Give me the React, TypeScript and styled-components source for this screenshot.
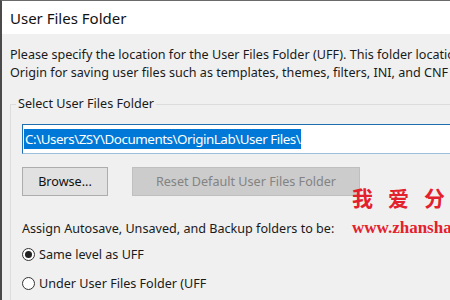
import { FC } from 'react';
import styled, { createGlobalStyle } from 'styled-components';

const GlobalStyle = createGlobalStyle`
  html, body {
    margin: 0;
    padding: 0;
    background: #f0f0f0;
  }
  body {
    font-family: 'Noto Sans', 'Open Sans', sans-serif;
    color: #1a1a1a;
  }
`;

const Window = styled.div`
  position: relative;
  width: 450px;
  height: 300px;
  overflow: hidden;
  box-sizing: border-box;
  border-left: 2px solid #4a4a4a;
  border-top: 1px solid #6a6a6a;
  background: #f0f0f0;
  display: flex;
  flex-direction: column;
`;

const TitleBar = styled.div`
  height: 33px;
  flex: none;
  background: #ffffff;
  display: flex;
  align-items: center;
  padding-left: 8px;
  font-size: 15px;
  color: #111;
`;

const Body = styled.div`
  flex: 1;
  padding: 12px 0 0 8px;
  white-space: nowrap;
  font-size: 12.6px;
`;

const Intro = styled.p`
  margin: 0;
  line-height: 18px;
`;

const GroupBox = styled.fieldset`
  margin: 13px 0 0 0;
  width: 480px;
  border: 1px solid #dcdcdc;
  border-right: none;
  padding: 11px 0 20px 11px;
  box-sizing: border-box;
`;

const GroupLabel = styled.legend`
  padding: 0 2px;
  margin-left: -6px;
  line-height: 18px;
`;

const PathField = styled.div`
  height: 30px;
  box-sizing: border-box;
  border: 1px solid #1f6fb0;
  border-bottom-color: #9ebfdc;
  background: #fff;
  display: flex;
  align-items: center;
  padding-left: 1px;
`;

const Selected = styled.span`
  background: #0078d7;
  color: #fff;
  font-size: 13.4px;
  letter-spacing: -0.45px;
  line-height: 20px;
  padding: 0 1px;
`;

const ButtonRow = styled.div`
  display: flex;
  gap: 24px;
  margin-top: 13px;
`;

const Button = styled.div<{ $disabled?: boolean; $width: number }>`
  width: ${({ $width }) => $width}px;
  height: 29px;
  box-sizing: border-box;
  display: flex;
  align-items: center;
  justify-content: center;
  background: ${({ $disabled }) => ($disabled ? '#cccccc' : '#e1e1e1')};
  border: 1px solid ${({ $disabled }) => ($disabled ? '#bfbfbf' : '#adadad')};
  color: ${({ $disabled }) => ($disabled ? '#838383' : '#111')};
`;

const AssignText = styled.div`
  line-height: 18px;
  margin-top: 24px;
`;

const RadioRow = styled.div`
  display: flex;
  align-items: center;
  gap: 4px;
  height: 18px;
  margin-top: 7px;
  & + & {
    margin-top: 11px;
  }
`;

const RadioDot = styled.span<{ $checked?: boolean }>`
  width: 13px;
  height: 13px;
  box-sizing: border-box;
  border-radius: 50%;
  border: 1px solid #333;
  background: #fff;
  display: flex;
  align-items: center;
  justify-content: center;
  &::after {
    content: '';
    width: 7px;
    height: 7px;
    border-radius: 50%;
    background: ${({ $checked }) => ($checked ? '#222' : 'transparent')};
  }
`;

const Watermark = styled.div`
  position: absolute;
  left: 350px;
  top: 182px;
  color: #e3212d;
  font-weight: bold;
  white-space: nowrap;
  pointer-events: none;
`;

const WatermarkCjk = styled.div`
  font-family: 'Noto Sans CJK SC', sans-serif;
  font-size: 21px;
  line-height: 28px;
  letter-spacing: 15px;
`;

const WatermarkUrl = styled.div`
  font-family: 'Liberation Serif', serif;
  font-size: 17px;
  line-height: 22px;
  margin-top: 6px;
`;

const App: FC = () => {
  return (
    <Window>
      <GlobalStyle />
      <TitleBar>User Files Folder</TitleBar>
      <Body>
        <Intro>Please specify the location for the User Files Folder (UFF). This folder location is used by</Intro>
        <Intro>Origin for saving user files such as templates, themes, filters, INI, and CNF files.</Intro>
        <GroupBox>
          <GroupLabel>Select User Files Folder</GroupLabel>
          <PathField>
            <Selected>C:\Users\ZSY\Documents\OriginLab\User Files\</Selected>
          </PathField>
          <ButtonRow>
            <Button $width={86}>Browse...</Button>
            <Button $width={228} $disabled>Reset Default User Files Folder</Button>
          </ButtonRow>
          <AssignText>Assign Autosave, Unsaved, and Backup folders to be:</AssignText>
          <RadioRow>
            <RadioDot $checked />
            Same level as UFF
          </RadioRow>
          <RadioRow>
            <RadioDot />
            Under User Files Folder (UFF
          </RadioRow>
        </GroupBox>
      </Body>
      <Watermark>
        <WatermarkCjk>我爱分享</WatermarkCjk>
        <WatermarkUrl>www.zhanshaoyi.net</WatermarkUrl>
      </Watermark>
    </Window>
  );
};

export default App;
